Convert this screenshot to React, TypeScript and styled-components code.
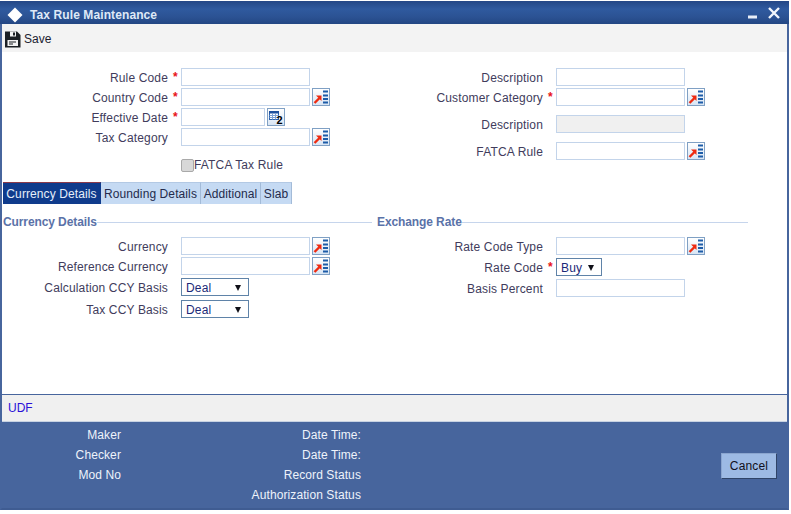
import styled, { createGlobalStyle } from "styled-components";

const GlobalStyle = createGlobalStyle`
  html, body {
    margin: 0;
    padding: 0;
    background: #ffffff;
  }
  * {
    box-sizing: border-box;
  }
`;

const Page = styled.div`
  width: 791px;
  height: 514px;
  padding-top: 1px;
  overflow: hidden;
  font-family: "Liberation Sans", Arial, sans-serif;
  font-size: 12px;
  color: #413c5c;
`;

const Window = styled.div`
  width: 789px;
  height: 509px;
  display: flex;
  flex-direction: column;
  background: #ffffff;
  border-left: 2px solid #47659d;
  border-right: 2px solid #47659d;
  border-bottom: 2px solid #3f5c92;
`;

const TitleBar = styled.div`
  height: 23px;
  margin: 0 -2px;
  padding: 4px 9px 0 7px;
  display: flex;
  align-items: center;
  background: linear-gradient(#244786 0, #2f5a9f 35%, #2b5293 70%, #234683 100%);
`;

const Title = styled.span`
  margin-left: 7px;
  flex: 1;
  font-size: 12px;
  font-weight: 700;
  letter-spacing: 0.1px;
  color: #dfe9f7;
`;

const Toolbar = styled.div`
  height: 28px;
  padding: 2px 0 0 2px;
  display: flex;
  align-items: center;
  gap: 3px;
  background: #f3f3f3;
  color: #1c1c30;
`;

const Main = styled.div`
  flex: 1;
  border-bottom: 1px solid #47659d;
`;

const Columns = styled.div`
  display: grid;
  grid-template-columns: 375px 371px;
`;

const TopForm = styled(Columns)`
  height: 130px;
  padding-top: 15px;
`;

const Field = styled.div<{ $height?: number; $gap?: number }>`
  height: ${(p) => p.$height ?? 20}px;
  margin-top: ${(p) => p.$gap ?? 0}px;
  display: flex;
  align-items: center;
`;

const Label = styled.label`
  width: 166px;
  padding-top: 1px;
  text-align: right;
  letter-spacing: 0.15px;
`;

const Star = styled.span`
  width: 13px;
  padding-left: 5px;
  color: #e8121c;
  font-weight: 700;
`;

const TextInput = styled.input<{ $disabled?: boolean }>`
  width: 129px;
  height: 18px;
  padding: 0 3px;
  border: 1px solid #c3d4ea;
  border-radius: 0;
  background: ${(p) => (p.$disabled ? "#f0f0f0" : "#ffffff")};
  outline: none;
`;

const DateInput = styled(TextInput)`
  width: 84px;
`;

const IconButton = styled.span`
  width: 18px;
  height: 18px;
  margin-left: 2px;
  display: inline-flex;
  border: 1px solid #7fa0c4;
  background: linear-gradient(#ffffff, #d8e5f4);
`;

const CheckRow = styled.div`
  margin-top: 11px;
  padding-left: 179px;
  display: flex;
  align-items: center;
  letter-spacing: 0.15px;
`;

const CheckBox = styled.input`
  appearance: none;
  width: 13px;
  height: 13px;
  margin: 0;
  border: 1px solid #a9a9a9;
  border-radius: 2px;
  background: #d8d8d8;
`;

const Tabs = styled.div`
  height: 22px;
  padding-left: 1px;
  display: flex;
`;

const Tab = styled.div<{ $active?: boolean; $width: number }>`
  width: ${(p) => p.$width}px;
  display: flex;
  align-items: center;
  justify-content: center;
  letter-spacing: 0.1px;
  white-space: nowrap;
  color: ${(p) => (p.$active ? "#e6effa" : "#242b4c")};
  background: ${(p) => (p.$active ? "#0f3b8c" : "#c5daf3")};
  border-top: 1px solid ${(p) => (p.$active ? "#8a3a4a" : "#b3c9e4")};
  border-right: 1px solid ${(p) => (p.$active ? "#0f3b8c" : "#a3bbd8")};
`;

const Section = styled(Columns)`
  margin-top: 11px;
`;

const Legend = styled.div`
  height: 14px;
  margin: 0 5px 7px 1px;
  display: flex;
  align-items: center;
  font-weight: 700;
  letter-spacing: -0.1px;
  color: #5a72a8;
  &::after {
    content: "";
    flex: 1;
    height: 1px;
    background: #c6d5ec;
  }
`;

const RightLegend = styled(Legend)`
  margin: 0 0 7px;
`;

const SelectBox = styled.div<{ $wide?: boolean }>`
  width: ${(p) => (p.$wide ? 68 : 46)}px;
  height: 18px;
  padding: 1px 7px 0 4px;
  display: flex;
  align-items: center;
  justify-content: space-between;
  border: 1px solid #5f83a8;
  color: #1b2a78;
  letter-spacing: 0.15px;
  &::after {
    content: "";
    border-left: 3px solid transparent;
    border-right: 3px solid transparent;
    border-top: 6px solid #101018;
  }
`;

const UdfBar = styled.div`
  height: 27px;
  padding-left: 6px;
  display: flex;
  align-items: center;
  background: #f0f0f0;
  border-bottom: 1px solid #c7d2e2;
  color: #2a10d8;
`;

const Footer = styled.div`
  height: 86px;
  margin: 0 -2px;
  padding: 3px 12px 0 0;
  display: grid;
  grid-template-columns: 121px 240px 1fr;
  grid-auto-rows: 20px;
  align-items: center;
  background: #47659d;
  color: #eef3fb;
  letter-spacing: 0.1px;
`;

const AuditLabel = styled.div<{ $col: number }>`
  grid-column: ${(p) => p.$col};
  text-align: right;
  white-space: nowrap;
`;

const CancelButton = styled.button`
  grid-column: 3;
  grid-row: 2 / span 2;
  justify-self: end;
  align-self: center;
  width: 56px;
  height: 26px;
  margin-top: 2px;
  padding: 0;
  border: 1px solid #8aa5cf;
  border-right-color: #2f4468;
  border-bottom-color: #2f4468;
  background: #9dbae4;
  color: #101020;
  font: 12px "Liberation Sans", Arial, sans-serif;
  letter-spacing: 0.15px;
`;

function Diamond() {
  return (
    <svg width="16" height="16" viewBox="0 0 16 16">
      <path d="M8 0.5 L15.5 8 L8 15.5 L0.5 8 Z" fill="#ffffff" />
    </svg>
  );
}

function WindowControls() {
  return (
    <svg width="32" height="18" viewBox="0 0 32 18">
      <rect x="0" y="9.5" width="9" height="3" fill="#e8eef8" />
      <path d="M21 2 L31 12 M31 2 L21 12" stroke="#f2f6fc" strokeWidth="2.4" />
    </svg>
  );
}

function SaveIcon() {
  return (
    <svg width="17" height="17" viewBox="0 0 17 17">
      <path d="M1 0.5 H13 L16.5 4 V16.5 H1 Z" fill="#1c2024" />
      <rect x="6" y="0.5" width="6" height="5" fill="#f3f3f3" />
      <rect x="9" y="1.5" width="2" height="3" fill="#1c2024" />
      <rect x="3.5" y="9" width="10.5" height="6" fill="#f3f3f3" />
      <rect x="5" y="10.5" width="7" height="1" fill="#1c2024" />
      <rect x="5" y="12.5" width="4" height="1" fill="#1c2024" />
    </svg>
  );
}

function LookupIcon() {
  return (
    <svg width="16" height="16" viewBox="0 0 16 16">
      <path d="M1.5 14 L6.5 9" stroke="#ee2a10" strokeWidth="2.4" />
      <path d="M3 6.5 H8.5 V12 Z" fill="#ee2a10" />
      <rect x="10" y="1.5" width="5" height="2" fill="#1d5ca8" />
      <rect x="10" y="5.5" width="5" height="2" fill="#1d5ca8" />
      <rect x="10" y="9" width="5" height="2" fill="#1d5ca8" />
      <rect x="10" y="12.5" width="5" height="2" fill="#1d5ca8" />
    </svg>
  );
}

function CalendarIcon() {
  return (
    <svg width="16" height="16" viewBox="0 0 16 16">
      <rect x="1.5" y="2.5" width="9" height="8" fill="#ffffff" stroke="#2a62b0" />
      <rect x="1" y="2" width="10" height="2.5" fill="#1d4f9c" />
      <path d="M1.5 6.5 H10.5 M1.5 8.5 H10.5 M4.5 4 V10.5 M7.5 4 V10.5" stroke="#7fa3d6" strokeWidth="1" />
      <text x="8.5" y="15" fontSize="11" fontWeight="700" fontFamily="Liberation Sans" fill="#000000">
        2
      </text>
    </svg>
  );
}

function Lookup() {
  return (
    <IconButton>
      <LookupIcon />
    </IconButton>
  );
}

export default function App() {
  return (
    <Page>
      <GlobalStyle />
      <Window>
        <TitleBar>
          <Diamond />
          <Title>Tax Rule Maintenance</Title>
          <WindowControls />
        </TitleBar>
        <Toolbar>
          <SaveIcon />
          <span>Save</span>
        </Toolbar>
        <Main>
          <TopForm>
            <div>
              <Field>
                <Label>Rule Code</Label>
                <Star>*</Star>
                <TextInput />
              </Field>
              <Field>
                <Label>Country Code</Label>
                <Star>*</Star>
                <TextInput />
                <Lookup />
              </Field>
              <Field>
                <Label>Effective Date</Label>
                <Star>*</Star>
                <DateInput />
                <IconButton>
                  <CalendarIcon />
                </IconButton>
              </Field>
              <Field>
                <Label>Tax Category</Label>
                <Star />
                <TextInput />
                <Lookup />
              </Field>
              <CheckRow>
                <CheckBox type="checkbox" />
                <span>FATCA Tax Rule</span>
              </CheckRow>
            </div>
            <div>
              <Field>
                <Label>Description</Label>
                <Star />
                <TextInput />
              </Field>
              <Field>
                <Label>Customer Category</Label>
                <Star>*</Star>
                <TextInput />
                <Lookup />
              </Field>
              <Field $gap={7}>
                <Label>Description</Label>
                <Star />
                <TextInput $disabled />
              </Field>
              <Field $gap={7}>
                <Label>FATCA Rule</Label>
                <Star />
                <TextInput />
                <Lookup />
              </Field>
            </div>
          </TopForm>
          <Tabs>
            <Tab $active $width={98}>Currency Details</Tab>
            <Tab $width={100}>Rounding Details</Tab>
            <Tab $width={60}>Additional</Tab>
            <Tab $width={31}>Slab</Tab>
          </Tabs>
          <Section>
            <div>
              <Legend>Currency Details</Legend>
              <Field>
                <Label>Currency</Label>
                <Star />
                <TextInput />
                <Lookup />
              </Field>
              <Field>
                <Label>Reference Currency</Label>
                <Star />
                <TextInput />
                <Lookup />
              </Field>
              <Field $height={22}>
                <Label>Calculation CCY Basis</Label>
                <Star />
                <SelectBox $wide>Deal</SelectBox>
              </Field>
              <Field $height={22}>
                <Label>Tax CCY Basis</Label>
                <Star />
                <SelectBox $wide>Deal</SelectBox>
              </Field>
            </div>
            <div>
              <RightLegend>Exchange Rate</RightLegend>
              <Field>
                <Label>Rate Code Type</Label>
                <Star />
                <TextInput />
                <Lookup />
              </Field>
              <Field $height={22}>
                <Label>Rate Code</Label>
                <Star>*</Star>
                <SelectBox>Buy</SelectBox>
              </Field>
              <Field>
                <Label>Basis Percent</Label>
                <Star />
                <TextInput />
              </Field>
            </div>
          </Section>
        </Main>
        <UdfBar>UDF</UdfBar>
        <Footer>
          <AuditLabel $col={1}>Maker</AuditLabel>
          <AuditLabel $col={2}>Date Time:</AuditLabel>
          <CancelButton>Cancel</CancelButton>
          <AuditLabel $col={1}>Checker</AuditLabel>
          <AuditLabel $col={2}>Date Time:</AuditLabel>
          <AuditLabel $col={1}>Mod No</AuditLabel>
          <AuditLabel $col={2}>Record Status</AuditLabel>
          <AuditLabel $col={2}>Authorization Status</AuditLabel>
        </Footer>
      </Window>
    </Page>
  );
}
